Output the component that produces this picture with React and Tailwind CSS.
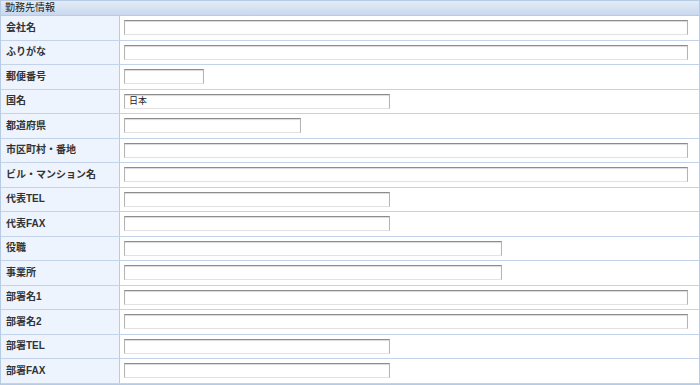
const rows = [
  { label: "会社名", w: "w-[564px]" },
  { label: "ふりがな", w: "w-[564px]" },
  { label: "郵便番号", w: "w-[80px]" },
  { label: "国名", w: "w-[266px]", value: "日本" },
  { label: "都道府県", w: "w-[177px]" },
  { label: "市区町村・番地", w: "w-[564px]" },
  { label: "ビル・マンション名", w: "w-[564px]" },
  { label: "代表TEL", w: "w-[266px]" },
  { label: "代表FAX", w: "w-[266px]" },
  { label: "役職", w: "w-[378px]" },
  { label: "事業所", w: "w-[378px]" },
  { label: "部署名1", w: "w-[564px]" },
  { label: "部署名2", w: "w-[564px]" },
  { label: "部署TEL", w: "w-[266px]" },
  { label: "部署FAX", w: "w-[266px]" },
];

function App() {
  return (
    <div
      className="w-[700px] h-[385px] bg-white overflow-hidden text-[#222]"
      style={{ fontFamily: '"Liberation Sans", "Noto Sans CJK JP", sans-serif' }}
    >
      <div className="border border-[#b7cbe4]">
        <div className="h-[15px] flex items-center px-[4px] text-[10px] leading-none text-[#222] bg-gradient-to-b from-[#e3ecf7] to-[#c8d8ee] border-b border-[#b7cbe4]">
          勤務先情報
        </div>
        {rows.map((r) => (
          <div
            key={r.label}
            className="flex h-[24.5px] border-b border-[#c3d4ea]"
          >
            <div className="w-[119px] shrink-0 bg-[#edf4fd] border-r border-[#b7cbe4] flex items-center pl-[5px] text-[10px] font-bold leading-none text-[#333]">
              {r.label}
            </div>
            <div className="flex-1 flex items-center pl-[4px]">
              <div
                className={`${r.w} h-[15px] border border-t-[#8c8c8c] border-l-[#b4b4b4] border-r-[#b4b4b4] border-b-[#e2e2e2] shadow-[inset_0_1px_1px_rgba(0,0,0,0.15)] bg-white flex items-center pl-[4px] text-[9px] leading-none`}
              >
                {r.value}
              </div>
            </div>
          </div>
        ))}
      </div>
    </div>
  );
}

export default App;
